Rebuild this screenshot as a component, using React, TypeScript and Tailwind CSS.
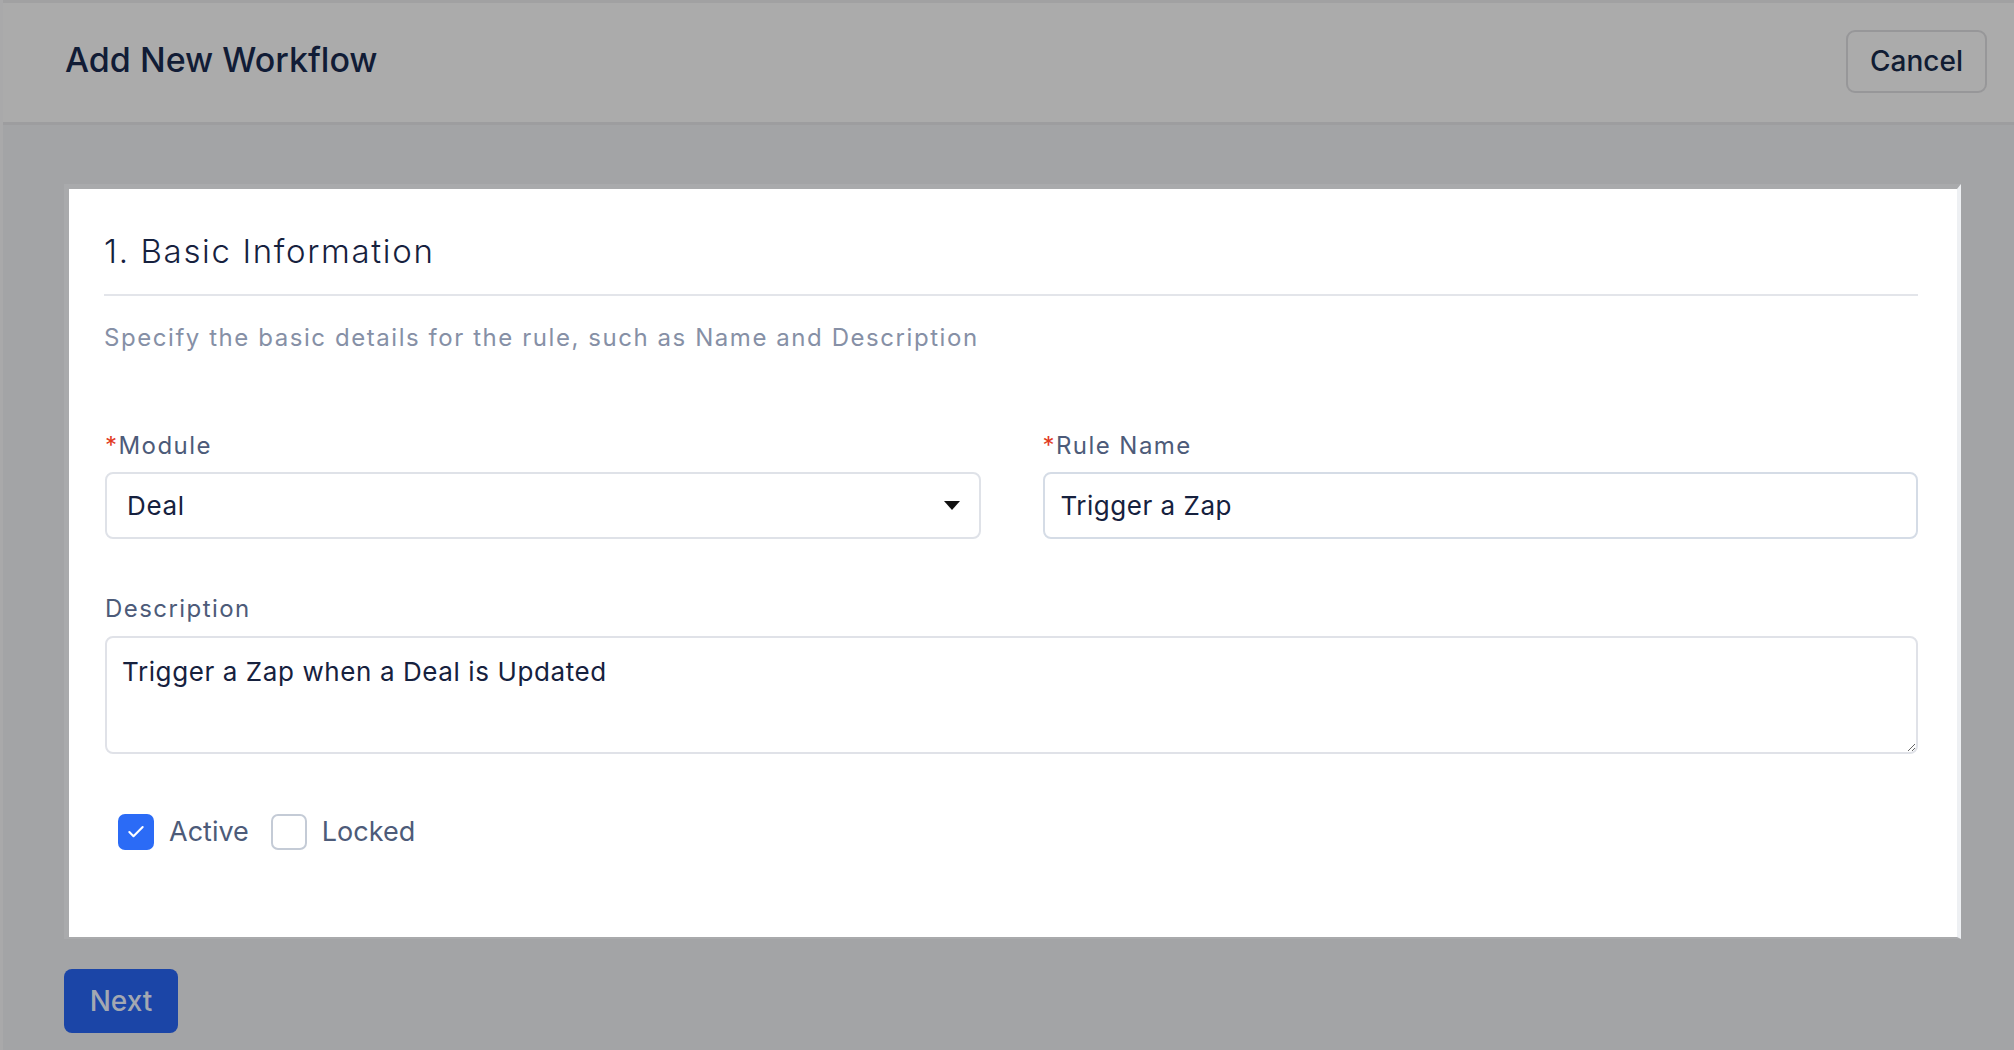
import { Check } from 'lucide-react';

function Label({ text, required }: { text: string; required?: boolean }) {
  return (
    <div className="text-[24px] leading-[32px] tracking-[0.06em] text-[#4d5b79]">
      {required && <span className="text-[#e23b1f]">*</span>}
      {text}
    </div>
  );
}

export default function App() {
  return (
    <div className="w-full h-[1050px] overflow-hidden bg-[#a3a4a6] font-['Inter',sans-serif] border-l-[3px] border-[#a9a9aa]">
      <header className="h-[125px] bg-[#ababab] border-t-[3px] border-t-[#a1a1a2] border-b-[3px] border-b-[#9d9d9f] flex items-center justify-between pl-[62px] pr-[27px]">
        <h1 className="text-[34px] leading-[40px] font-medium text-[#111c36] -mt-[6px]">Add New Workflow</h1>
        <button className="w-[141px] h-[63px] rounded-[9px] border-2 border-[#979799] text-[28px] font-medium text-[#111c33] -mt-[3px]">
          Cancel
        </button>
      </header>

      <main className="pt-[59px] pl-[61px] pr-[53px]">
        <section className="bg-white border-t-[5px] border-l-[5px] border-b-[2px] border-r-[4px] border-t-[#a9aaac] border-l-[#a9aaac] border-b-[#a9aaac] border-r-[#eef0f3]">
          <div className="pl-[35px] pr-[39px] pt-[42px] pb-[84px]">
            <h2 className="text-[33px] leading-[40px] font-light tracking-[0.05em] text-[#16213e]">1. Basic Information</h2>
            <div className="mt-[23px] h-[2px] bg-[#e3e5ea]" />
            <p className="mt-[26px] text-[24px] leading-[32px] tracking-[0.065em] text-[#8690a6]">
              Specify the basic details for the rule, such as Name and Description
            </p>

            <div className="mt-[76px] grid grid-cols-2 gap-x-[62px] pl-px">
              <div>
                <Label text="Module" required />
                <div className="mt-[10px] h-[67px] rounded-[8px] border-2 border-[#dfe2e8] flex items-center justify-between pl-[20px] pr-[19px]">
                  <span className="text-[26px] tracking-[0.025em] text-[#16213e]">Deal</span>
                  <svg width="16" height="9" viewBox="0 0 16 9">
                    <path d="M0 0 L16 0 L8 9 Z" fill="#111" />
                  </svg>
                </div>
              </div>
              <div>
                <Label text="Rule Name" required />
                <input
                  readOnly
                  defaultValue="Trigger a Zap"
                  className="mt-[10px] w-full h-[67px] rounded-[8px] border-2 border-[#d5dce6] pl-[16px] text-[26px] tracking-[0.02em] text-[#16213e] outline-none"
                />
              </div>
            </div>

            <div className="mt-[54px] pl-px">
              <Label text="Description" />
              <textarea
                readOnly
                defaultValue="Trigger a Zap when a Deal is Updated"
                className="mt-[11px] block w-full h-[118px] rounded-[8px] border-2 border-[#e0e2e8] pl-[15px] pt-[16px] text-[26px] leading-[36px] tracking-[0.023em] text-[#16213e] outline-none resize-y"
              />
            </div>

            <div className="mt-[58px] pl-[14px] flex items-center">
              <div className="w-[36px] h-[36px] rounded-[7px] bg-[#2b6bf6] flex items-center justify-center">
                <Check className="w-[20px] h-[20px] text-white" strokeWidth={2.5} />
              </div>
              <span className="ml-[15px] text-[27px] text-[#4d5b79]">Active</span>
              <div className="ml-[22px] w-[36px] h-[36px] rounded-[7px] border-2 border-[#c4cbd6] bg-white" />
              <span className="ml-[15px] text-[27px] text-[#4d5b79]">Locked</span>
            </div>
          </div>
        </section>

        <button className="mt-[30px] w-[114px] h-[64px] rounded-[8px] bg-[#1b45a7] text-[28px] font-medium text-[#a3a8b2]">
          Next
        </button>
      </main>
    </div>
  );
}
